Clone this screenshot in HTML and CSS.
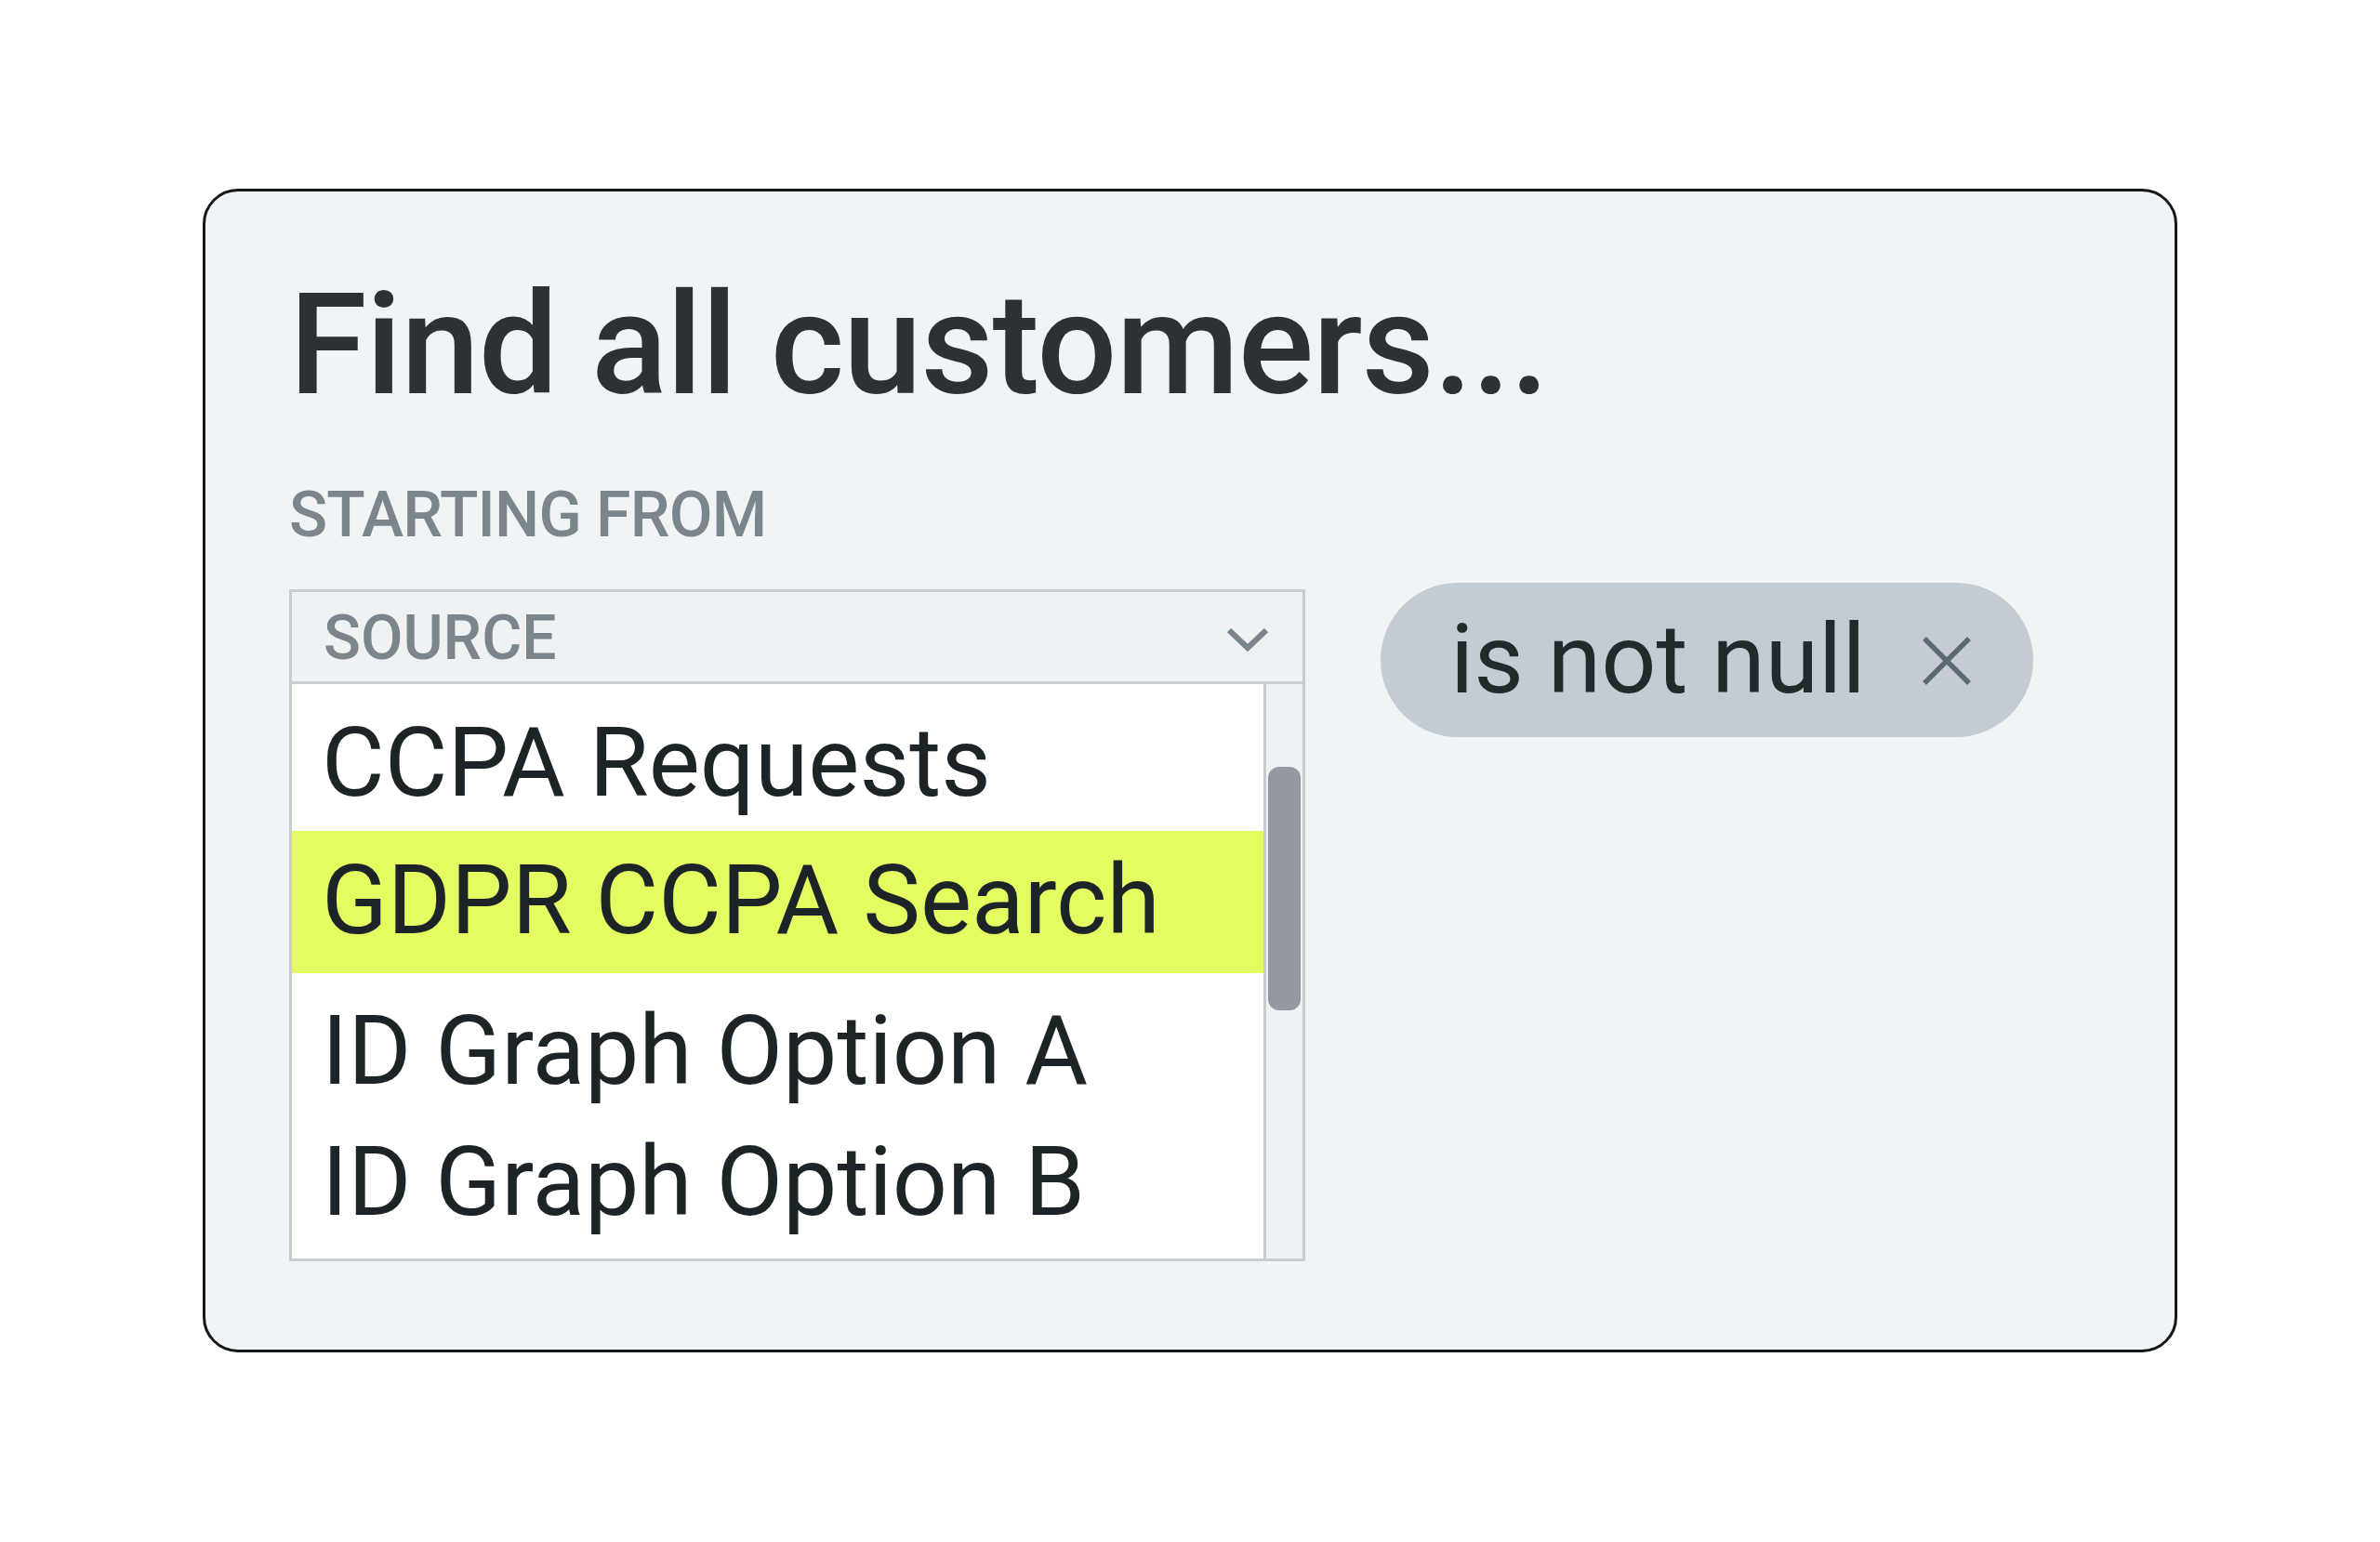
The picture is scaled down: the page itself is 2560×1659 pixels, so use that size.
FILE: index.html
```html
<!DOCTYPE html>
<html lang="en">
<head>
<meta charset="utf-8">
<title>Find all customers</title>
<link rel="stylesheet" href="styles.css">
</head>
<body>
<div class="card">
  <h1 class="title">Find all customers...</h1>
  <div class="label">STARTING FROM</div>
  <div class="row">
    <div class="select">
      <div class="select-head">
        <span class="select-name">SOURCE</span>
        <svg class="chev" width="46" height="30" viewBox="0 0 46 30"><path d="M3 5 L23 24 L43 5" fill="none" stroke="#7b858c" stroke-width="6"/></svg>
      </div>
      <div class="select-body">
        <div class="options">
          <div class="opt opt-first">CCPA Requests</div>
          <div class="opt opt-sel">GDPR CCPA Search</div>
          <div class="opt opt-after">ID Graph Option A</div>
          <div class="opt">ID Graph Option B</div>
        </div>
        <div class="track"><div class="thumb"></div></div>
      </div>
    </div>
    <div class="chip">
      <span class="chip-text">is not null</span>
      <svg class="chip-x" width="54" height="54" viewBox="0 0 54 54"><path d="M3 3 L51 51 M51 3 L3 51" stroke="#5d6870" stroke-width="5.5" fill="none"/></svg>
    </div>
  </div>
</div>
</body>
</html>
```
FILE: styles.css
```css
html, body {
  margin: 0;
  padding: 0;
  background: #ffffff;
}
body {
  font-family: Roboto, "Noto Sans", "Liberation Sans", sans-serif;
  padding: 203px 0 0 218px;
}
.card {
  box-sizing: border-box;
  width: 2124px;
  height: 1252px;
  border: 3px solid #151818;
  border-radius: 38px;
  background: #f1f4f7;
  padding: 89px 0 0 90px;
}
.title {
  margin: 0;
  font-size: 152px;
  line-height: 152px;
  font-weight: 500;
  letter-spacing: -1.1px;
  color: #2b3134;
}
.label {
  margin-top: 73px;
  font-size: 68px;
  line-height: 68px;
  font-weight: 500;
  letter-spacing: -0.8px;
  color: #7b858c;
}
.row {
  margin-top: 46px;
  display: flex;
  align-items: flex-start;
  gap: 81px;
}
.select {
  box-sizing: border-box;
  width: 1093px;
  border: 3px solid #c6ced3;
  background: #eef2f5;
}
.select-head {
  display: flex;
  align-items: center;
  justify-content: space-between;
  height: 93px;
  padding: 3px 36px 0 34px;
  border-bottom: 3px solid #c6ced3;
}
.select-name {
  font-size: 66px;
  line-height: 66px;
  font-weight: 500;
  color: #7b858c;
}
.chev {
  display: block;
  margin-top: 2px;
}
.select-body {
  display: flex;
}
.options {
  flex: 1;
  background: #ffffff;
  padding: 14px 0 12px;
}
.opt {
  font-size: 104px;
  line-height: 141px;
  letter-spacing: 0;
  color: #1d2427;
  padding-left: 32px;
  white-space: nowrap;
}
.opt-sel {
  margin-top: 3px;
  padding-top: 4px;
  padding-bottom: 8px;
  background: #e4fc62;
}
.opt-after {
  margin-top: 13px;
}
.track {
  width: 42px;
  border-left: 3px solid #c6ced3;
  background: #eef2f5;
  padding: 89px 2px 0 2px;
  box-sizing: border-box;
  flex: none;
}
.thumb {
  height: 262px;
  border-radius: 12px;
  background: #9499a0;
}
.chip {
  margin-top: -7px;
  height: 166px;
  border-radius: 83px;
  background: #c2ccd2;
  display: flex;
  align-items: center;
  padding: 0 66px 0 75px;
  gap: 60px;
}
.chip-text {
  font-size: 104px;
  line-height: 166px;
  color: #232a2d;
  white-space: nowrap;
}
.chip-x {
  display: block;
  margin-top: 2px;
}
```
